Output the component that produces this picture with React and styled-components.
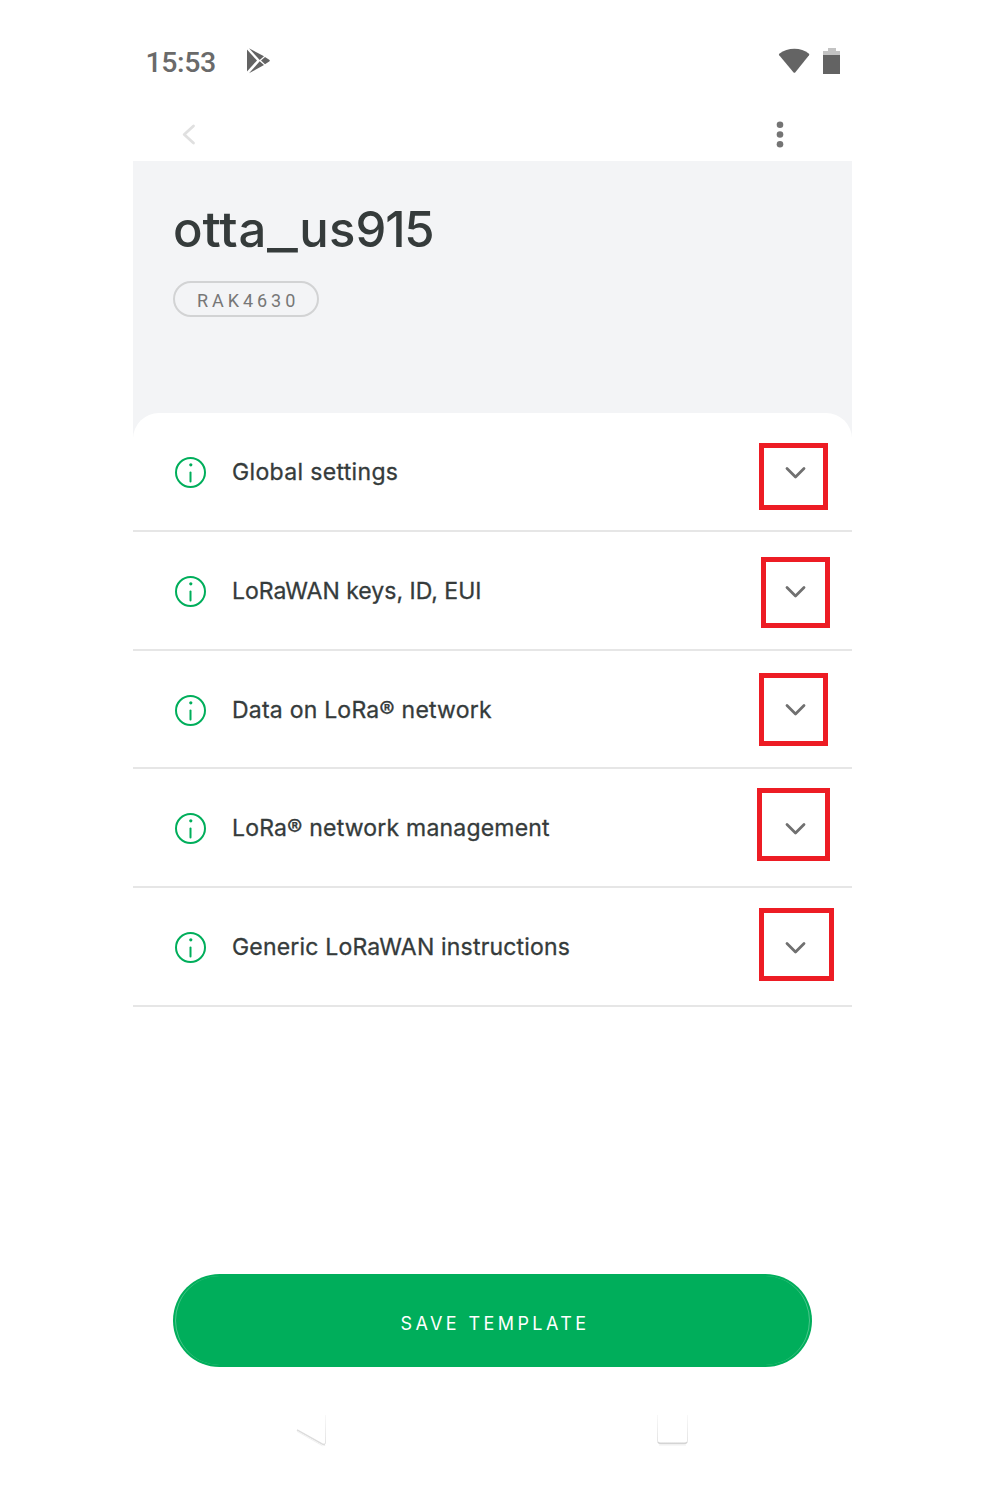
import React from "react";
import styled, { createGlobalStyle } from "styled-components";

const Global = createGlobalStyle`
  * { box-sizing: border-box; }
  body { margin: 0; background: #fff; }
`;

const Page = styled.div`
  width: 1001px;
  height: 1511px;
  padding-left: 133px;
  background: #fff;
  font-family: Inter, "Liberation Sans", sans-serif;
  color: #353b3b;
`;

const Screen = styled.main`
  width: 719px;
  height: 100%;
  display: flex;
  flex-direction: column;
`;

const StatusBar = styled.div`
  height: 107px;
  padding: 15px 12px 0 12.5px;
  display: flex;
  align-items: center;
`;

const Clock = styled.span`
  width: 100.5px;
  padding-top: 3px;
  font: 500 28.5px/34px Roboto, sans-serif;
  letter-spacing: -0.4px;
  color: #6a6a6a;
`;

const StatusIcons = styled.div`
  margin-left: auto;
  display: flex;
  align-items: center;
  gap: 13px;
`;

const AppBar = styled.nav`
  height: 54px;
  padding: 0 67px 0 48px;
  display: flex;
  align-items: center;
  justify-content: space-between;
`;

const IconButton = styled.button`
  display: flex;
  padding: 0;
  border: 0;
  background: none;
`;

const Header = styled.header`
  height: 252px;
  padding: 39px 40px 0;
  background: #f3f4f6;
`;

const Title = styled.h1`
  margin: 0;
  height: 60px;
  font-size: 49px;
  line-height: 60px;
  font-weight: 500;
  letter-spacing: 0;
  white-space: nowrap;
`;

const Tracked = styled.span`
  letter-spacing: ${(p) => p.$by}px;
`;

const Stretched = styled.span`
  display: inline-block;
  margin: 0 ${(p) => p.$after}px 0 ${(p) => p.$before}px;
  transform: translateY(${(p) => p.$drop || 0}px) scaleX(${(p) => p.$scale});
`;

const Chip = styled.div`
  width: 146px;
  height: 36px;
  margin-top: 21px;
  padding: 3px 0 0 22px;
  border: 2px solid #d2d3d4;
  border-radius: 18px;
  font: 400 18px/30px Roboto, sans-serif;
  letter-spacing: 3.95px;
  color: #777;
`;

const CardBackdrop = styled.div`
  background: linear-gradient(#f3f4f6 24px, #fff 24px);
`;

const Card = styled.section`
  background: #fff;
  border-radius: 26px 26px 0 0;
`;

const Row = styled.div`
  position: relative;
  height: ${(p) => p.$height}px;
  padding: 2px 45px 0 41px;
  display: flex;
  align-items: center;
  border-bottom: 2px solid #e6e6e6;
`;

const Label = styled.span`
  flex: 1;
  margin-left: 25px;
  padding-bottom: 1px;
  font-size: 23px;
  line-height: 30px;
  font-weight: 400;
  letter-spacing: ${(p) => p.$tracking}px;
  -webkit-text-stroke: 0.3px currentColor;
`;

const Highlight = styled.div`
  position: absolute;
  left: ${(p) => p.$box[0]}px;
  top: ${(p) => p.$box[1]}px;
  width: ${(p) => p.$box[2]}px;
  height: ${(p) => p.$box[3]}px;
  border: 5px solid #ed1c24;
`;

const Actions = styled.div`
  margin-top: auto;
  padding: 0 40px;
`;

const SaveButton = styled.button`
  position: relative;
  width: 100%;
  height: 93px;
  display: flex;
  align-items: center;
  justify-content: center;
  padding: 5px 0 0 5px;
  border: 0;
  border-radius: 47px;
  background: #00ae5b;
  color: #fff;
  font: 400 18px/24px Inter, sans-serif;
  letter-spacing: 3.4px;

  &::after {
    content: "";
    position: absolute;
    inset: 2px;
    border: solid rgba(255, 255, 255, 0.3);
    border-width: 0 1px;
    border-radius: 45px;
  }
`;

const SaveText = styled.span`
  padding-top: 1px;
`;

const NavBar = styled.div`
  height: 144px;
  padding: 48px 162.5px 0 161px;
  display: flex;
  align-items: flex-start;
  justify-content: space-between;
`;

const InfoIcon = () => (
  <svg width="33" height="33" viewBox="0 0 33 33" fill="none" stroke="#00ae5b" strokeWidth="2">
    <circle cx="16.5" cy="16.5" r="14.5" />
    <path d="M16.5 16.500v9" strokeLinecap="round" />
    <circle cx="16.8" cy="8.8" r="1.6" fill="#00ae5b" stroke="none" />
  </svg>
);

const ChevronDown = () => (
  <svg width="22" height="14" viewBox="0 0 22 14" fill="none" stroke="#707070" strokeWidth="2.8" strokeLinecap="round" strokeLinejoin="round">
    <path d="M2 2.500 10.500 11l8.500-8.500" />
  </svg>
);

const rows = [
  { label: "Global settings", height: 119, tracking: 0.34, box: [626, 30, 69, 67] },
  { label: "LoRaWAN keys, ID, EUI", height: 119, tracking: 0, box: [628, 25, 69, 71] },
  { label: "Data on LoRa® network", height: 118, tracking: 0.22, box: [626, 22, 69, 73] },
  { label: "LoRa® network management", height: 119, tracking: 0.2, box: [624, 19, 73, 73] },
  { label: "Generic LoRaWAN instructions", height: 119, tracking: 0.19, box: [626, 20, 75, 73] },
];

export default function App() {
  return (
    <Page>
      <Global />
      <Screen>
        <StatusBar>
          <Clock>15:53</Clock>
          <svg width="25" height="26" viewBox="0 0 25 26" fill="#636363">
            <path d="M1 1.5v22L11 12.500z" />
            <path d="M3 .3 18 8.300l-4.300 3.700z" />
            <path d="M3 25.300 18 17l-4.300-3.800z" />
            <path d="M15 12.600 19 9l4.200 2.700q1.500.9 0 1.800L19 16.200z" />
          </svg>
          <StatusIcons>
            <svg width="32" height="26" viewBox="0 0 32 26" fill="#646464">
              <path d="M1.2 5.8Q8 .8 16.400.8T31 5.800Q31.600 6.500 31 7.300L17.200 24.400Q16.400 25.200 15.600 24.400L1.200 7.300Q.6 6.500 1.200 5.800z" />
            </svg>
            <svg width="17" height="26" viewBox="0 0 17 26">
              <path d="M5 0h8v3h4v5H0V3h5z" fill="#c3c3c3" />
              <path d="M0 7h17v19H0z" fill="#636363" />
            </svg>
          </StatusIcons>
        </StatusBar>
        <AppBar>
          <IconButton aria-label="Back">
            <svg width="15" height="22" viewBox="0 0 15 22" fill="none" stroke="#e0e0e0" strokeWidth="2.8" strokeLinecap="round" strokeLinejoin="round">
              <path d="M12.500 3 3.200 11.500l9.300 8.500" />
            </svg>
          </IconButton>
          <IconButton aria-label="More">
            <svg width="10" height="28" viewBox="0 0 10 28" fill="#747474">
              <circle cx="5" cy="4.800" r="3.300" />
              <circle cx="5" cy="14.500" r="3.300" />
              <circle cx="5" cy="24.300" r="3.300" />
            </svg>
          </IconButton>
        </AppBar>
        <Header>
          <Title>
            o
            <Stretched $scale={1.1} $before={1} $after={3}>tt</Stretched>
            a
            <Stretched $scale={1.36} $before={5} $after={5} $drop={1}>_</Stretched>
            <Tracked $by={0.3}>us</Tracked>
            <Tracked $by={-1.3}>915</Tracked>
          </Title>
          <Chip>RAK4630</Chip>
        </Header>
        <CardBackdrop>
          <Card>
            {rows.map((r) => (
              <Row key={r.label} $height={r.height}>
                <InfoIcon />
                <Label $tracking={r.tracking}>{r.label}</Label>
                <ChevronDown />
                <Highlight $box={r.box} />
              </Row>
            ))}
          </Card>
        </CardBackdrop>
        <Actions>
          <SaveButton>
            <SaveText>SAVE TEMPLATE</SaveText>
          </SaveButton>
        </Actions>
        <NavBar>
          <svg width="34" height="34" viewBox="0 0 34 34" fill="none">
            <defs>
              <linearGradient id="edge" x1="0" y1="0" x2="0" y2="30" gradientUnits="userSpaceOnUse">
                <stop offset="0" stopColor="#f8f8f8" />
                <stop offset="1" stopColor="#e2e2e2" />
              </linearGradient>
            </defs>
            <path d="M31.500 0v28q0 1.500-2 1" stroke="url(#edge)" />
            <path d="M3 14.800 28.500 29.200q1.500.8 2.500.3" stroke="#dcdcdc" strokeWidth="1.500" />
            <path d="M3 16.300 28.500 30.800" stroke="#f0f0f0" />
          </svg>
          <svg width="34" height="34" viewBox="0 0 34 34" fill="none">
            <path d="M1.500 0v26q0 2 2 2h26q2 0 2-2V0" stroke="url(#edge)" />
            <path d="M2 27q.8 1.500 2.500 1.500h24q1.700 0 2.500-1.500" stroke="#d4d4d4" strokeWidth="1.400" />
            <path d="M3 30h27" stroke="#efefef" />
          </svg>
        </NavBar>
      </Screen>
    </Page>
  );
}
